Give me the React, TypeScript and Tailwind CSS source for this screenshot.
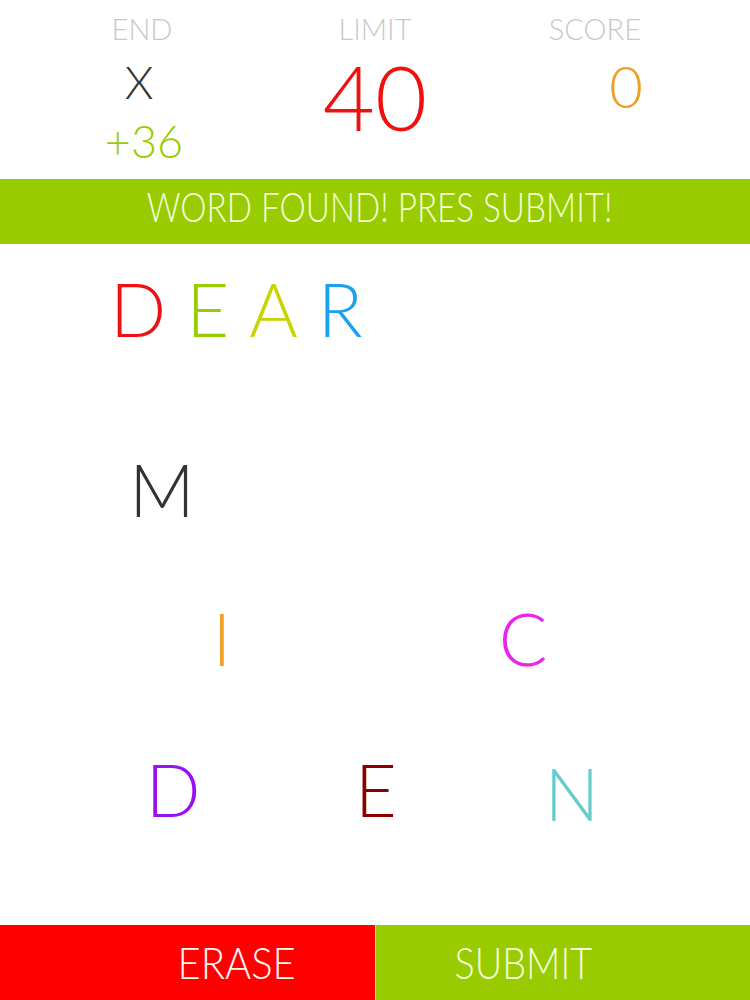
import React from 'react'

const font = "font-['Lato',_'Noto_Sans',_sans-serif]"

interface Tile {
  ch: string
  left: string
  top: string
  color: string
}

// scattered tiles on the board
const tiles: Tile[] = [
  { ch: 'M', left: 'left-[112px]', top: 'top-[209px]', color: 'text-[#333333]' },
  { ch: 'I', left: 'left-[172px]', top: 'top-[358px]', color: 'text-[#f0a020]' },
  { ch: 'C', left: 'left-[473px]', top: 'top-[358px]', color: 'text-[#ee22ee]' },
  { ch: 'D', left: 'left-[123px]', top: 'top-[509px]', color: 'text-[#9911ee]' },
  { ch: 'E', left: 'left-[326px]', top: 'top-[509px]', color: 'text-[#880000]' },
  { ch: 'N', left: 'left-[522px]', top: 'top-[513px]', color: 'text-[#66cccc]' },
]

const word = [
  { ch: 'D', color: 'text-[#ee1111]' },
  { ch: 'E', color: 'text-[#99cc00]' },
  { ch: 'A', color: 'text-[#c8d400]' },
  { ch: 'R', color: 'text-[#1ba1f0]' },
]

export default function App() {
  return (
    <div className={`w-[750px] h-[1000px] flex flex-col bg-white overflow-hidden ${font}`}>
      {/* header */}
      <div className="h-[179px] flex shrink-0">
        <div className="w-[250px] flex flex-col items-center pl-[34px] pt-[14px]">
          <span className="text-[29px] leading-none font-light text-[#c8c8cc]">END</span>
          <span className="mt-[16px] text-[46px] leading-none font-light text-[#333333] -translate-x-[3px]">X</span>
          <span className="mt-[14px] text-[45px] leading-none font-light text-[#99cc00] translate-x-[2px]">+36</span>
        </div>
        <div className="w-[250px] flex flex-col items-center pt-[14px]">
          <span className="text-[29px] leading-none font-light text-[#c8c8cc]">LIMIT</span>
          <span className="mt-[8px] text-[90px] leading-none font-light text-[#f01010]">40</span>
        </div>
        <div className="w-[250px] flex flex-col items-end pr-[109px] pt-[14px]">
          <span className="text-[29px] leading-none font-light text-[#c8c8cc]">SCORE</span>
          <span className="mt-[14px] text-[58px] leading-none font-light text-[#f0a020] translate-x-[2px]">0</span>
        </div>
      </div>

      {/* status banner */}
      <div className="h-[65px] shrink-0 bg-[#99cc00] flex justify-center pt-[7px] pl-[10px]">
        <span className="text-[41px] leading-none font-light text-[#f2ffd9] whitespace-nowrap scale-x-[0.81]">
          WORD FOUND! PRES SUBMIT!
        </span>
      </div>

      {/* board */}
      <div className="relative flex-1">
        <div className="flex pl-[110px] pt-[28px] gap-[20px]">
          {word.map((w, i) => (
            <span key={i} className={`text-[74px] leading-none font-light ${w.color}`}>
              {w.ch}
            </span>
          ))}
        </div>
        {tiles.map((t, i) => (
          <span
            key={i}
            className={`absolute w-[100px] text-center text-[72px] leading-none font-light ${t.left} ${t.top} ${t.color}`}
          >
            {t.ch}
          </span>
        ))}
      </div>

      {/* actions */}
      <div className="h-[75px] shrink-0 flex">
        <button className="w-[375px] bg-[#ff0000] flex items-center justify-center pl-[98px]">
          <span className="text-[43px] leading-none font-light text-[#fff4f4] scale-x-[0.93]">ERASE</span>
        </button>
        <button className="w-[375px] bg-[#99cc00] border-l border-[#d4e88a] flex items-center justify-center pr-[79px]">
          <span className="text-[43px] leading-none font-light text-[#f2ffd9] scale-x-[0.88]">SUBMIT</span>
        </button>
      </div>
    </div>
  )
}
